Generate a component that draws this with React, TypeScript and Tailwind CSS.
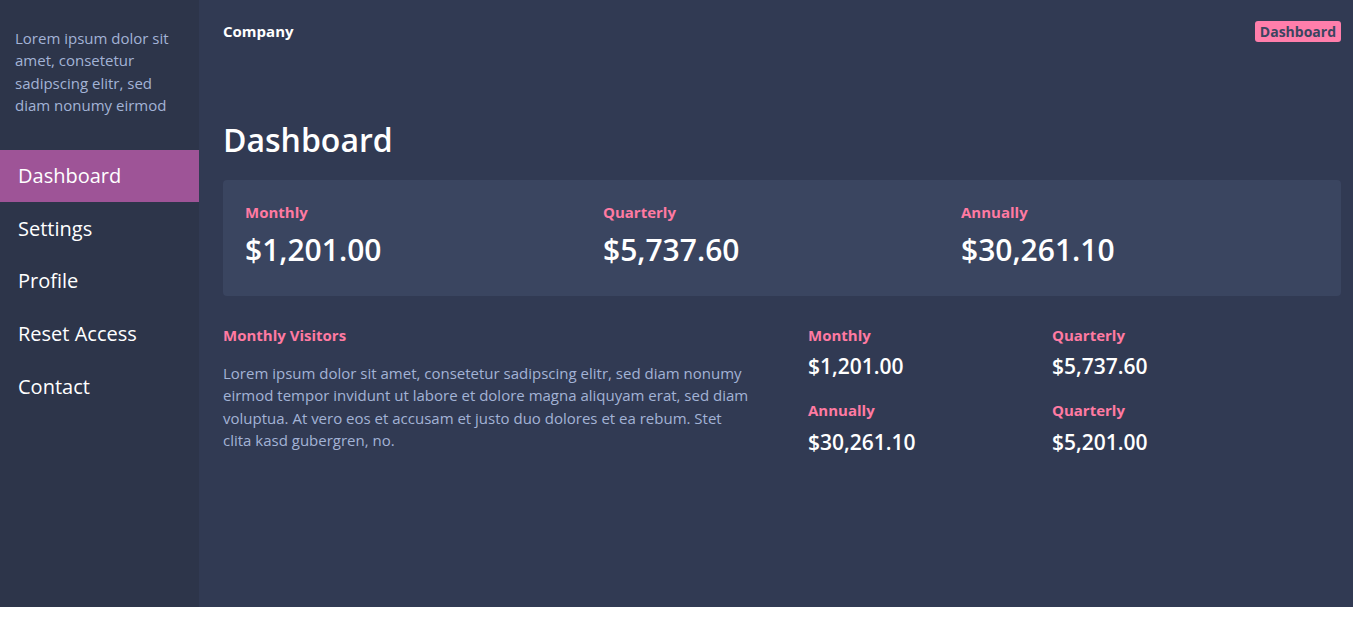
const navItems = ["Dashboard", "Settings", "Profile", "Reset Access", "Contact"];

const totals = [
  { label: "Monthly", value: "$1,201.00" },
  { label: "Quarterly", value: "$5,737.60" },
  { label: "Annually", value: "$30,261.10" },
];

const small = [
  { label: "Monthly", value: "$1,201.00" },
  { label: "Quarterly", value: "$5,737.60" },
  { label: "Annually", value: "$30,261.10" },
  { label: "Quarterly", value: "$5,201.00" },
];

export default function App() {
  return (
    <div className="w-[1353px] h-[607px] flex font-['Open_Sans','Liberation_Sans',sans-serif]">
      {/* Sidebar */}
      <aside className="w-[199px] shrink-0 bg-[#2d354a]">
        <p className="px-[15px] pt-[27px] text-[15px] leading-[22.3px] text-[#a3b3d6]">
          Lorem ipsum dolor sit amet, consetetur sadipscing elitr, sed diam nonumy eirmod
        </p>
        <nav className="mt-[34px]">
          {navItems.map((item, i) => (
            <div
              key={item}
              className={
                i === 0
                  ? "h-[52px] flex items-center pl-[18px] text-[20px] text-white bg-[#9e5497]"
                  : "h-[52.7px] flex items-center pl-[18px] text-[20px] text-white"
              }
            >
              {item}
            </div>
          ))}
        </nav>
      </aside>

      {/* Main */}
      <main className="flex-1 bg-[#313a53] pl-6 pr-3">
        <header className="flex items-center justify-between pt-[20px]">
          <span className="text-[15px] font-bold text-white">Company</span>
          <span className="px-[5px] h-[21px] flex items-center rounded-[3px] bg-[#ff7eab] text-[14px] font-bold text-[#3a4560]">
            Dashboard
          </span>
        </header>

        <h1 className="mt-[77px] text-[32px] leading-[40px] font-semibold text-white">Dashboard</h1>

        <section className="mt-[20px] h-[116px] rounded-[4px] bg-[#3a4560] px-[22px] pt-[21px] grid grid-cols-3">
          {totals.map((t) => (
            <div key={t.label}>
              <div className="text-[15px] font-bold text-[#ff7aa2]">{t.label}</div>
              <div className="mt-[9px] text-[30px] leading-[36px] font-semibold text-white">{t.value}</div>
            </div>
          ))}
        </section>

        <section className="mt-[28px] flex">
          <div className="w-[528px]">
            <h2 className="text-[15px] font-bold text-[#ff7aa2]">Monthly Visitors</h2>
            <p className="mt-[16px] text-[15px] leading-[22.3px] text-[#a3b3d6]">
              Lorem ipsum dolor sit amet, consetetur sadipscing elitr, sed diam nonumy eirmod tempor invidunt ut labore et
              dolore magna aliquyam erat, sed diam voluptua. At vero eos et accusam et justo duo dolores et ea rebum. Stet
              clita kasd gubergren, no.
            </p>
          </div>
          <div className="ml-[57px] grid grid-cols-[244px_244px] gap-y-[19px]">
            {small.map((s, i) => (
              <div key={i}>
                <div className="text-[15px] font-bold text-[#ff7aa2]">{s.label}</div>
                <div className="mt-[6px] text-[21px] leading-[28px] font-semibold text-white">{s.value}</div>
              </div>
            ))}
          </div>
        </section>
      </main>
    </div>
  );
}
